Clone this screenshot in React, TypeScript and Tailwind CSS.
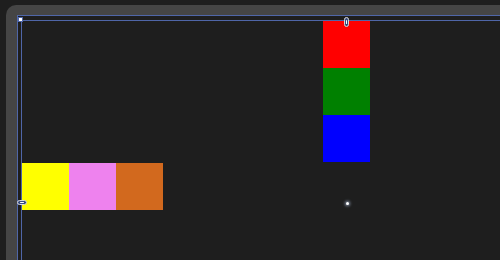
import React from 'react';

const columnColors = ['bg-[#ff0000]', 'bg-[#008000]', 'bg-[#0000ff]'];
const rowColors = ['bg-[#ffff00]', 'bg-[#ee82ee]', 'bg-[#d2691e]'];

const App = () => {
  return (
    <div className="w-[500px] h-[260px] overflow-hidden bg-[#1e1e1e] pl-[6px] pt-[5px]">
      {/* ruler frame */}
      <div className="h-full rounded-tl-[10px] bg-[#454545] pl-[11px] pt-[10px]">
        <div className="relative h-full border-l border-t border-[#4f66a8] pl-[3px] pt-[4px] bg-[#1e1e1e]">
          <div className="relative h-full border-l border-t border-[#4f66a8] bg-[#1e1e1e]">
            {/* vertical column */}
            <div className="absolute left-[301px] top-0 flex flex-col">
              {columnColors.map((c) => (
                <div key={c} className={`w-[47px] h-[47px] ${c}`} />
              ))}
            </div>
            {/* horizontal row */}
            <div className="absolute left-0 top-[142px] flex">
              {rowColors.map((c) => (
                <div key={c} className={`w-[47px] h-[47px] ${c}`} />
              ))}
            </div>
            {/* anchor dot */}
            <div className="absolute left-[324px] top-[181px] w-[3px] h-[3px] rounded-full bg-white shadow-[0_0_3px_1px_rgba(200,220,255,0.6)]" />
            {/* corner marker */}
            <div className="absolute -left-[3px] -top-[3px] w-[3px] h-[3px] bg-white outline outline-1 outline-[#4f66a8]" />
          </div>
          {/* top handle */}
          <div className="absolute left-[326px] top-[1px] w-[5px] h-[10px] rounded-full border border-[#d8d8d8] bg-[#3a4e80] flex items-center justify-center">
            <div className="w-[1px] h-[4px] bg-white rounded-full" />
          </div>
          {/* left handle */}
          <div className="absolute -left-[1px] top-[184px] w-[10px] h-[5px] rounded-full border border-[#d8d8d8] bg-[#3a4e80] flex items-center justify-center">
            <div className="w-[4px] h-[1px] bg-white rounded-full" />
          </div>
        </div>
      </div>
    </div>
  );
};

export default App;
